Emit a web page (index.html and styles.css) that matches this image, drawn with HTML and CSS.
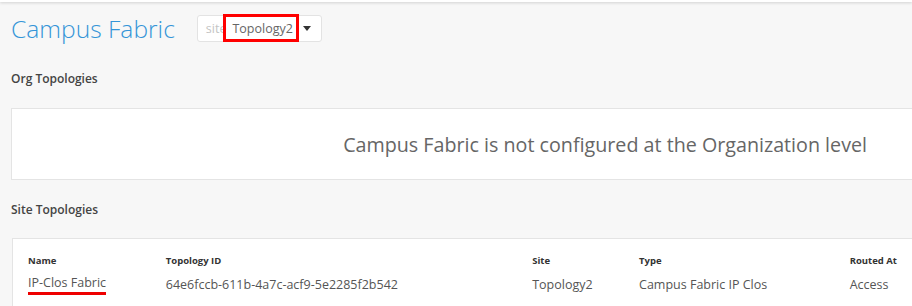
FILE: index.html
```html
<!DOCTYPE html>
<html lang="en">
<head>
    <meta charset="UTF-8">
    <meta name="viewport" content="width=device-width, initial-scale=1.0">
    <title>Campus Fabric</title>
    <link rel="stylesheet" href="styles.css">
</head>
<body>
    <div class="topbar"></div>
    <div class="page">
        <div class="page-header">
            <h1 class="page-title">Campus Fabric</h1>
            <div class="site-select">
                <span class="site-label">site</span>
                <span class="site-value">Topology2</span>
                <span class="caret"></span>
            </div>
        </div>

        <h2 class="section-title">Org Topologies</h2>
        <div class="card empty-card">
            Campus Fabric is not configured at the Organization level
        </div>

        <h2 class="section-title">Site Topologies</h2>
        <div class="card table-card">
            <table class="topology-table">
                <thead>
                    <tr>
                        <th class="col-name">Name</th>
                        <th class="col-id">Topology ID</th>
                        <th class="col-site">Site</th>
                        <th class="col-type">Type</th>
                        <th class="col-routed">Routed At</th>
                    </tr>
                </thead>
                <tbody>
                    <tr>
                        <td><span class="marked">IP-Clos Fabric</span></td>
                        <td>64e6fccb-611b-4a7c-acf9-5e2285f2b542</td>
                        <td>Topology2</td>
                        <td>Campus Fabric IP Clos</td>
                        <td>Access</td>
                    </tr>
                </tbody>
            </table>
        </div>
    </div>
</body>
</html>
```

FILE: styles.css
```css
body {
    margin: 0;
    font-family: 'Open Sans', sans-serif;
    background-color: #f7f7f7;
    overflow: hidden;
}

.topbar {
    height: 2px;
    background-color: #fff;
    box-shadow: 0 1px 3px rgba(0, 0, 0, 0.18);
}

.page {
    padding-left: 11px;
}

.page-header {
    display: flex;
    align-items: center;
    gap: 22px;
    height: 52px;
}

.page-title {
    margin: 0;
    font-size: 24.6px;
    font-weight: 300;
    color: #3595d8;
}

.site-select {
    display: flex;
    align-items: center;
    box-sizing: border-box;
    height: 27px;
    margin-top: 1px;
    padding: 0 10px 0 8px;
    background-color: #fff;
    border: 1px solid #e3e3e3;
    border-radius: 3px;
    font-size: 12.5px;
}

.site-label {
    color: #c4c4c4;
}

.site-value {
    display: flex;
    align-items: center;
    box-sizing: border-box;
    height: 28px;
    margin: 0 0 1px -3px;
    padding: 0 3px 0 6px;
    color: #666;
    border: 3px solid #f00;
}

.caret {
    margin-left: 4px;
    border-left: 4px solid transparent;
    border-right: 4px solid transparent;
    border-top: 5px solid #333;
}

.section-title {
    margin: 0;
    line-height: 17px;
    font-size: 12px;
    font-weight: 600;
    color: #444;
}

.page-header + .section-title {
    margin-top: 16px;
}

.card {
    background-color: #fff;
    border: 1px solid #e4e4e4;
    border-right: 0;
}

.empty-card {
    box-sizing: border-box;
    height: 72px;
    margin: 21px 0;
    padding-right: 45px;
    display: flex;
    align-items: center;
    justify-content: flex-end;
    font-size: 19.7px;
    color: #666;
}

.table-card {
    margin-top: 20px;
    margin-left: 1px;
    padding: 15px 15px 12px;
}

.topology-table {
    border-collapse: collapse;
    font-size: 12.5px;
    color: #555;
    white-space: nowrap;
}

.topology-table th {
    text-align: left;
    font-size: 9.5px;
    font-weight: 700;
    color: #333;
    padding: 0 0 7px;
}

.topology-table td {
    padding: 0;
}

.col-name { width: 138px; }
.col-id { width: 367px; }
.col-site { width: 107px; }
.col-type { width: 211px; }

.marked {
    display: inline-block;
    padding-bottom: 1px;
    border-bottom: 3px solid #e00;
}
```
